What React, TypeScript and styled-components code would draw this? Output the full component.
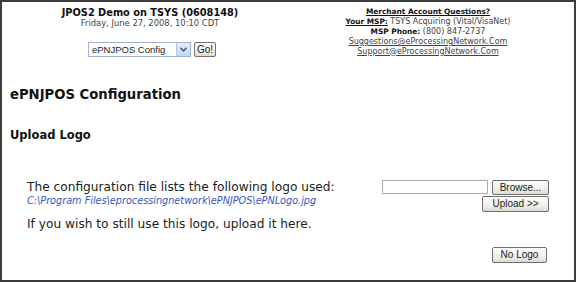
import styled, { createGlobalStyle } from "styled-components";

const GlobalStyle = createGlobalStyle`
    body {
        margin: 0;
        background: #fff;
        font-family: "DejaVu Sans", Verdana, sans-serif;
        color: #1e1e1e;
    }
`

export default function App() {
    return (
        <>
            <GlobalStyle />
            <Page>
                <Header>
                    <HeaderLeft>
                        <SiteTitle>JPOS2 Demo on TSYS (0608148)</SiteTitle>
                        <DateLine>Friday, June 27, 2008, 10:10 CDT</DateLine>
                        <NavForm onSubmit={(e) => e.preventDefault()}>
                            <SelectBox>
                                <NavSelect defaultValue="config">
                                    <option value="config">ePNJPOS Config</option>
                                </NavSelect>
                                <SelectArrow>
                                    <svg width="7" height="5" viewBox="0 0 7 5">
                                        <path d="M0.5 0.8 L3.5 3.8 L6.5 0.8" fill="none" stroke="#4d6185" strokeWidth="1.6" />
                                    </svg>
                                </SelectArrow>
                            </SelectBox>
                            <OldButton type="submit">Go!</OldButton>
                        </NavForm>
                    </HeaderLeft>
                    <HeaderRight>
                        <ContactTitle>Merchant Account Questions?</ContactTitle>
                        <ContactLine><ContactLabel $underline>Your MSP:</ContactLabel> TSYS Acquiring (Vital/VisaNet)</ContactLine>
                        <ContactLine><ContactLabel>MSP Phone:</ContactLabel> (800) 847-2737</ContactLine>
                        <ContactLink href="#">Suggestions@eProcessingNetwork.Com</ContactLink>
                        <ContactLink href="#">Support@eProcessingNetwork.Com</ContactLink>
                    </HeaderRight>
                </Header>

                <PageTitle>ePNJPOS Configuration</PageTitle>
                <SectionTitle>Upload Logo</SectionTitle>

                <UploadRow>
                    <UploadText>
                        <BodyLine>The configuration file lists the following logo used:</BodyLine>
                        <LogoPath>C:\Program Files\eprocessingnetwork\ePNJPOS\ePNLogo.jpg</LogoPath>
                        <BodyLine $spaced>If you wish to still use this logo, upload it here.</BodyLine>
                    </UploadText>
                    <UploadControls>
                        <FileRow>
                            <FileInput type="text" readOnly />
                            <OldButton $width={57}>Browse...</OldButton>
                        </FileRow>
                        <OldButton $width={67} $height={16}>Upload &gt;&gt;</OldButton>
                        <NoLogoButton $width={55} $height={16}>No Logo</NoLogoButton>
                    </UploadControls>
                </UploadRow>
            </Page>
        </>
    )
}

const Page = styled.div`
    width: 576px;
    height: 282px;
    box-sizing: border-box;
    border: 2px solid #3c3c3c;
    overflow: hidden;
`

const Header = styled.div`
    display: grid;
    grid-template-columns: 296px 260px;
    padding-top: 5px;
`

const HeaderLeft = styled.div`
    display: flex;
    flex-direction: column;
    align-items: center;
`

const SiteTitle = styled.div`
    font-size: 9.8px;
    font-weight: bold;
    line-height: 11px;
    color: #111;
`

const DateLine = styled.div`
    font-size: 8.4px;
    line-height: 10px;
    color: #444;
`

const NavForm = styled.form`
    display: flex;
    align-items: center;
    gap: 3px;
    margin: 0;
    margin-top: 14px;
    margin-left: 4px;
`

const SelectBox = styled.div`
    display: flex;
    align-items: stretch;
    width: 101px;
    height: 13px;
    border: 1px solid #9fb4cf;
    background: #fff;
`

const NavSelect = styled.select`
    appearance: none;
    flex: 1;
    border: none;
    outline: none;
    background: transparent;
    padding: 0 0 0 3px;
    font-family: "Liberation Sans", Arial, sans-serif;
    font-size: 9.5px;
    color: #222;
`

const SelectArrow = styled.span`
    width: 13px;
    display: flex;
    align-items: center;
    justify-content: center;
    background: linear-gradient(#e6eefc, #c4d4f2);
    border-left: 1px solid #b7c7e3;
`

const OldButton = styled.button<{ $width?: number; $height?: number }>`
    width: ${p => p.$width ? `${p.$width}px` : "auto"};
    height: ${p => p.$height ?? 15}px;
    padding: 0 2px;
    box-sizing: border-box;
    border: 1px solid #6f6f6f;
    border-radius: 2px;
    background: linear-gradient(#fdfdfc, #ecebe4 70%, #dcdad2);
    font-family: "Liberation Sans", Arial, sans-serif;
    font-size: 10px;
    line-height: 1;
    color: #222;
    cursor: pointer;
`

const HeaderRight = styled.div`
    display: flex;
    flex-direction: column;
    align-items: center;
    font-size: 8px;
    line-height: 10px;
    color: #444;
`

const ContactTitle = styled.div`
    font-size: 7.4px;
    font-weight: bold;
    text-decoration: underline;
    color: #111;
`

const ContactLine = styled.div``

const ContactLabel = styled.strong<{ $underline?: boolean }>`
    font-size: 7.4px;
    color: #111;
    text-decoration: ${p => p.$underline ? "underline" : "none"};
`

const ContactLink = styled.a`
    color: #444;
    text-decoration: underline;
    line-height: 9.5px;
`

const PageTitle = styled.h1`
    margin: 30px 0 0 8px;
    font-size: 13.2px;
    line-height: 16px;
    font-weight: bold;
    color: #111;
`

const SectionTitle = styled.h2`
    margin: 24px 0 0 8px;
    font-size: 11.5px;
    line-height: 16px;
    font-weight: bold;
    color: #111;
`

const UploadRow = styled.div`
    display: flex;
    justify-content: space-between;
    margin-top: 37px;
    padding: 0 25px 0 25px;
`

const UploadText = styled.div`
    display: flex;
    flex-direction: column;
`

const BodyLine = styled.div<{ $spaced?: boolean }>`
    font-size: 12.2px;
    line-height: 15px;
    color: #222;
    margin-top: ${p => p.$spaced ? "10px" : "0"};
`

const LogoPath = styled.div`
    font-size: 9.7px;
    line-height: 12px;
    font-style: italic;
    color: #3556c8;
`

const UploadControls = styled.div`
    display: flex;
    flex-direction: column;
    align-items: flex-end;
    gap: 1px;
`

const FileRow = styled.div`
    display: flex;
    gap: 4px;
`

const FileInput = styled.input`
    width: 106px;
    height: 14px;
    box-sizing: border-box;
    border: 1px solid #a5acb5;
    padding: 0;
    outline: none;
`

const NoLogoButton = styled(OldButton)`
    margin-top: 34px;
    margin-right: 2px;
`
